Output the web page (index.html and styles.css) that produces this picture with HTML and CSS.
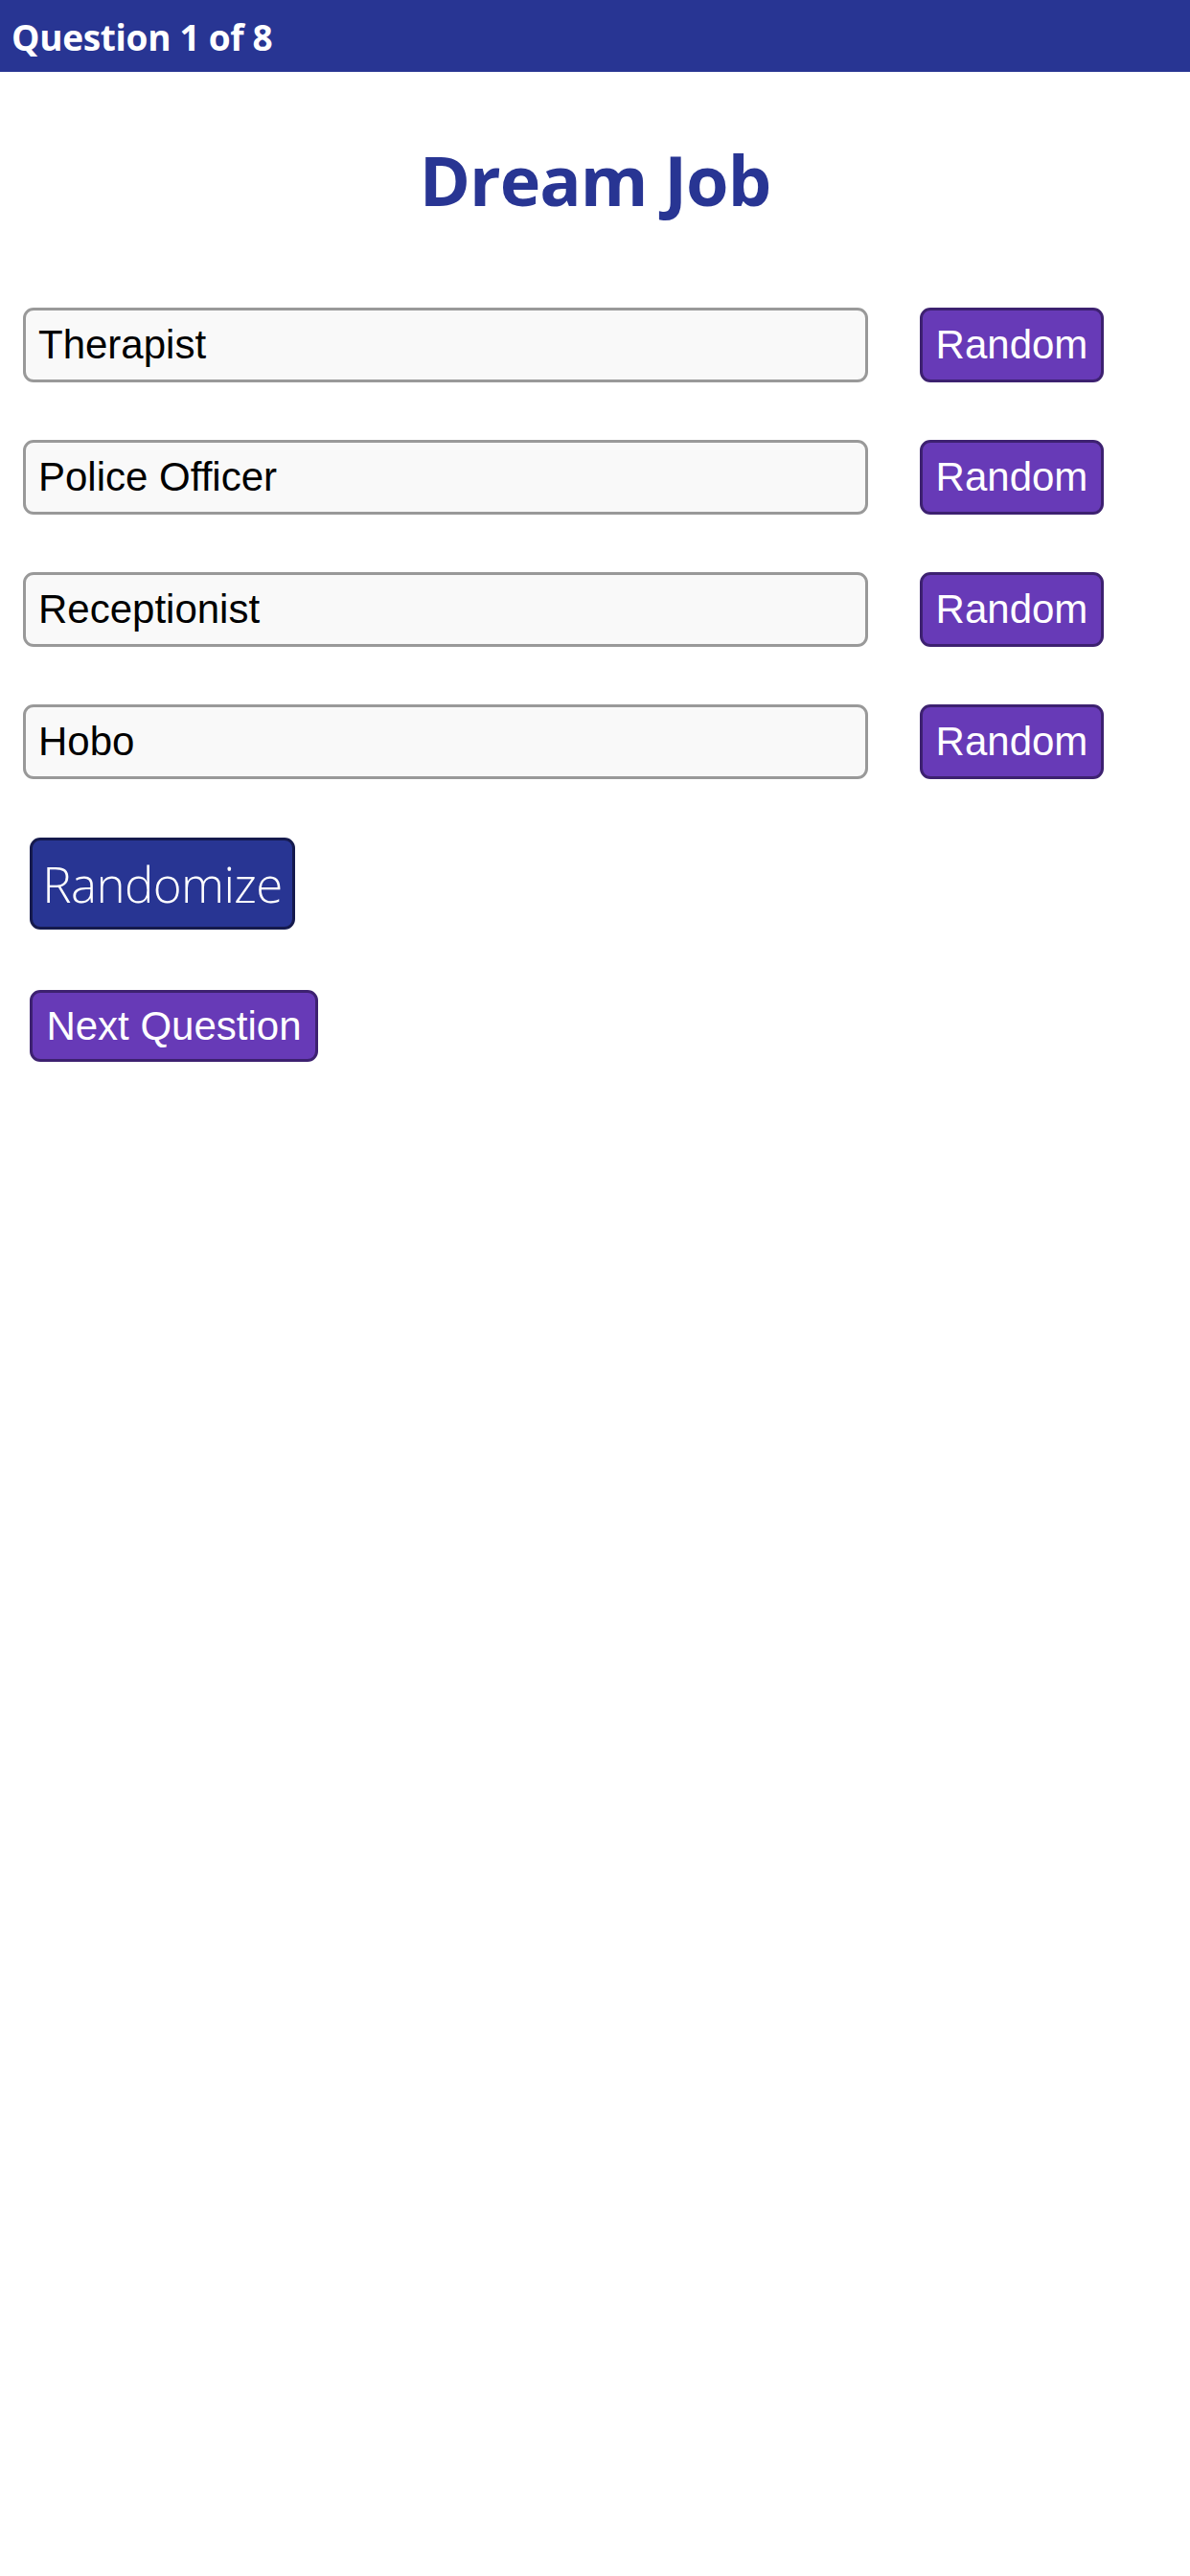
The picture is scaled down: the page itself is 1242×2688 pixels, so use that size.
FILE: index.html
```html
<!DOCTYPE html>
<html lang="en">
<head>
<meta charset="utf-8">
<title>Dream Job</title>
<link rel="stylesheet" href="styles.css">
</head>
<body>
  <header class="topbar">Question 1 of 8</header>
  <main class="content">
    <h1 class="title">Dream Job</h1>
    <div class="rows">
      <div class="row">
        <input class="field" type="text" value="Therapist">
        <button class="btn-random">Random</button>
      </div>
      <div class="row">
        <input class="field" type="text" value="Police Officer">
        <button class="btn-random">Random</button>
      </div>
      <div class="row">
        <input class="field" type="text" value="Receptionist">
        <button class="btn-random">Random</button>
      </div>
      <div class="row">
        <input class="field" type="text" value="Hobo">
        <button class="btn-random">Random</button>
      </div>
    </div>
    <div class="actions">
      <button class="btn-randomize">Randomize</button>
      <button class="btn-next">Next Question</button>
    </div>
  </main>
</body>
</html>
```

FILE: styles.css
```css
* { box-sizing: border-box; }
html, body { margin: 0; padding: 0; background: #ffffff; }
body { font-family: "Open Sans", "Noto Sans", sans-serif; }

.topbar {
  height: 75px;
  background: #283593;
  color: #ffffff;
  font-family: "Open Sans", sans-serif;
  font-weight: 700;
  font-size: 37px;
  line-height: 77px;
  padding-left: 12px;
  letter-spacing: -0.3px;
}

.content { padding: 0 24px; }

.title {
  margin: 62px 0 0;
  text-align: center;
  color: #283593;
  font-family: "Open Sans", sans-serif;
  font-weight: 700;
  font-size: 72px;
  line-height: 100px;
  letter-spacing: -1px;
}

.rows {
  margin-top: 84px;
  display: flex;
  flex-direction: column;
  gap: 60px;
}

.row {
  display: flex;
  align-items: center;
  gap: 54px;
}

.field {
  width: 882px;
  height: 78px;
  margin: 0;
  border: 3px solid #999999;
  border-radius: 11px;
  background: #f9f9f9;
  font-family: "Liberation Sans", Arial, sans-serif;
  font-size: 42px;
  color: #000000;
  padding: 0 0 0 13px;
  outline: none;
}

.btn-random, .btn-next {
  height: 78px;
  margin: 0;
  border: 3px solid #3d2170;
  border-radius: 11px;
  background: #673ab7;
  color: #ffffff;
  font-family: "Liberation Sans", Arial, sans-serif;
  font-size: 42px;
  padding: 0 14px;
}

.btn-random { width: 192px; padding: 0; }

.actions {
  margin-top: 61px;
  padding-left: 7px;
  display: flex;
  flex-direction: column;
  align-items: flex-start;
  gap: 63px;
}

.btn-randomize {
  height: 96px;
  width: 277px;
  margin: 0;
  border: 3px solid #151a4d;
  border-radius: 11px;
  background: #283593;
  color: #ffffff;
  font-family: "Open Sans", sans-serif;
  font-weight: 300;
  font-size: 51px;
  padding: 0;
  letter-spacing: -0.6px;
}

.btn-next {
  height: 75px;
  width: 301px;
  padding: 0;
}
```
